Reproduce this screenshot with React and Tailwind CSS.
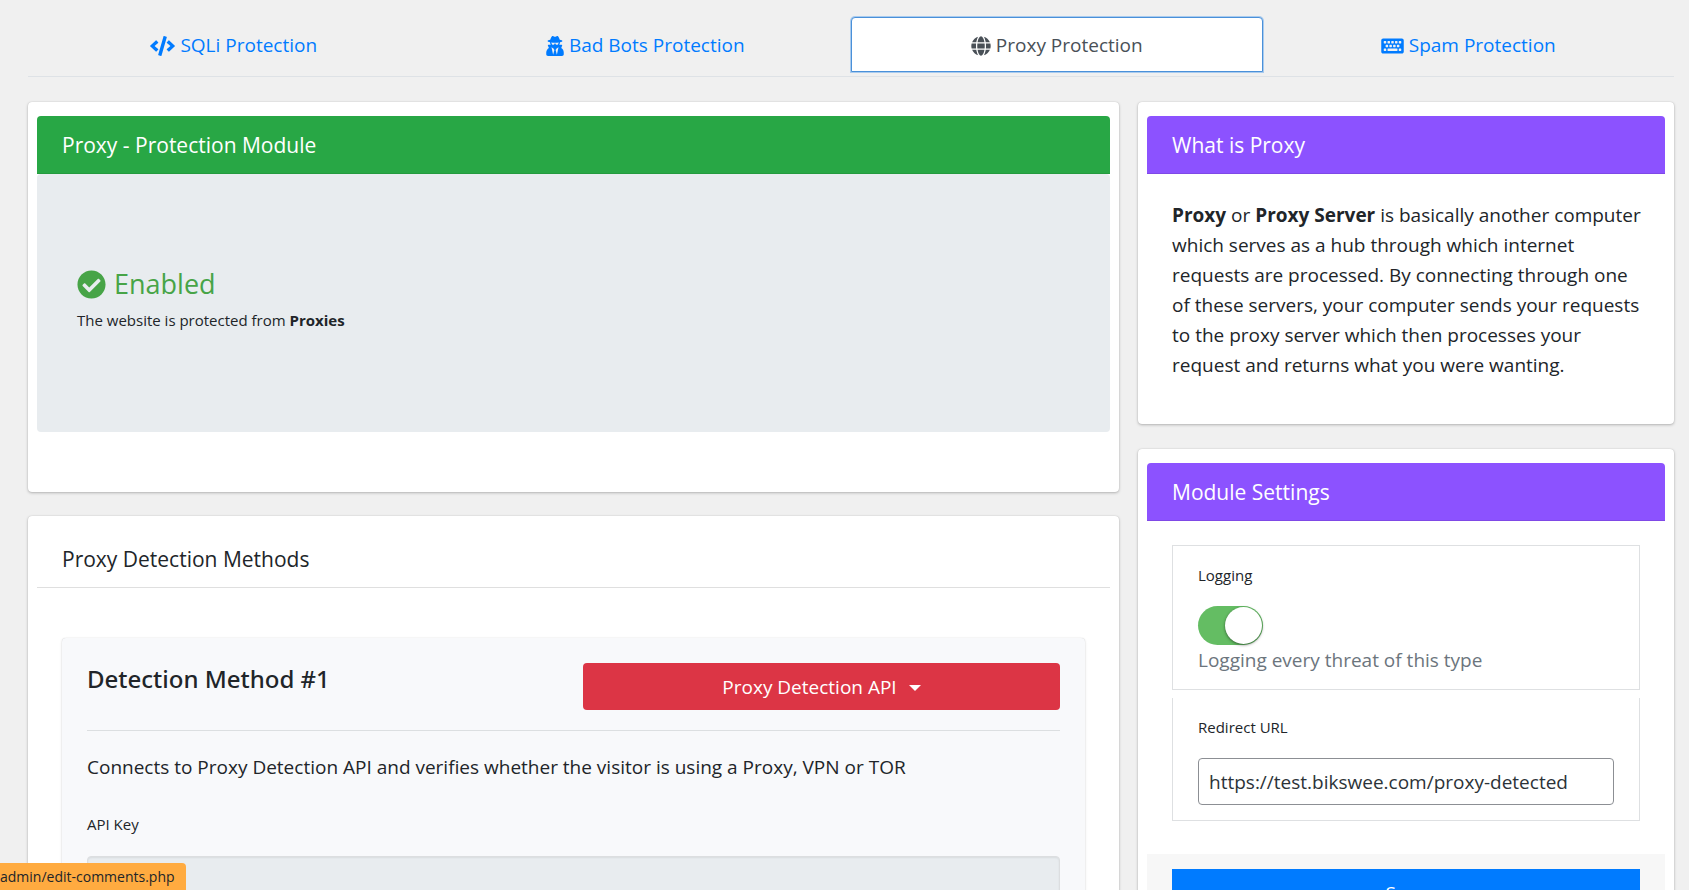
import { FaCode, FaUserSecret, FaGlobe, FaKeyboard, FaCheckCircle } from "react-icons/fa";

const tabs = [
  { label: "SQLi Protection", Icon: FaCode, iconClass: "w-[25px]" },
  { label: "Bad Bots Protection", Icon: FaUserSecret, iconClass: "w-[18px]" },
  { label: "Proxy Protection", Icon: FaGlobe, iconClass: "w-5", active: true },
  { label: "Spam Protection", Icon: FaKeyboard, iconClass: "w-[23px]" },
];

function Tab({ label, Icon, iconClass, active }) {
  const state = active
    ? "border-[#4a90d9] bg-white text-[#495057] shadow-[0_0_0_1px_#a9cbee]"
    : "border-transparent text-[#007bff]";
  return (
    <a
      href="#"
      aria-current={active ? "page" : undefined}
      className={`flex flex-1 items-center justify-center gap-[5px] rounded-t border pt-[13px] pb-[11px] leading-[29px] ${state}`}
    >
      <Icon className={`h-5 ${iconClass}`} aria-hidden="true" />
      {label}
    </a>
  );
}

function Card({ children }) {
  return (
    <section className="rounded bg-white px-[9px] pt-[14px] shadow-[0_0_1px_rgba(0,0,0,0.2),0_1px_3px_rgba(0,0,0,0.25)]">
      {children}
    </section>
  );
}

function CardHeader({ children, tone }) {
  return (
    <header className={`rounded-t border-b px-[25px] pt-[15px] pb-[13px] ${tone}`}>
      <h3 className="text-[21px] leading-[29px]">{children}</h3>
    </header>
  );
}

const purple = "border-[#7f49e6] bg-[#8c52ff] text-white";

export default function App() {
  return (
    <div className="relative h-screen overflow-hidden bg-[#f0f0f0] px-7 pt-[17px] pr-[15px] font-['Open_Sans',sans-serif] text-[19px] leading-[30px] text-[#212529]">
      <nav className="flex h-[60px] items-start border-b border-[#dee2e6]" aria-label="Protection modules">
        {tabs.map((tab) => (
          <Tab key={tab.label} {...tab} />
        ))}
      </nav>

      <main className="mt-[25px] grid grid-cols-3 items-start gap-[19px]">
        <div className="col-span-2 flex flex-col gap-6">
          <Card>
            <CardHeader tone="border-[#249a3e] bg-[#28a745] text-white">Proxy - Protection Module</CardHeader>
            <div className="mb-[60px] rounded bg-[#e8ecef] px-10 pt-[89px] pb-[97px]">
              <h2 className="flex items-center gap-2 text-[27px] leading-[42px] text-[#47a447]">
                <FaCheckCircle className="size-[29px]" aria-hidden="true" />
                Enabled
              </h2>
              <p className="text-[15px]">
                The website is protected from <strong>Proxies</strong>
              </p>
            </div>
          </Card>

          <Card>
            <CardHeader tone="border-[#dfdfdf]">Proxy Detection Methods</CardHeader>
            <div className="px-[25px] py-[50px]">
              <section className="rounded bg-[#f8f9fb] p-[25px] shadow-[0_0_1px_rgba(0,0,0,0.2),0_1px_3px_rgba(0,0,0,0.12)]">
                <div className="grid grid-cols-2 gap-[19px] border-b border-[#dcdfe1] pb-5">
                  <h4 className="font-['Noto_Sans',sans-serif] text-[24px] leading-[31px] font-medium">
                    Detection Method #1
                  </h4>
                  <button
                    type="button"
                    className="flex items-center justify-center gap-3 rounded bg-[#dc3545] px-3 pt-[9px] pb-[7px] leading-[31px] text-white"
                  >
                    Proxy Detection API
                    <span className="border-x-[6px] border-t-[6px] border-x-transparent border-t-white" aria-hidden="true" />
                  </button>
                </div>
                <p className="pt-[21px]">
                  Connects to Proxy Detection API and verifies whether the visitor is using a Proxy, VPN or TOR
                </p>
                <label htmlFor="api-key" className="mt-[27px] mb-[17px] block text-[15px]">
                  API Key
                </label>
                <input
                  id="api-key"
                  type="text"
                  disabled
                  className="block h-12 w-full rounded border border-[#dcdee0] bg-[#e8ecef] px-3 shadow-[inset_0_1px_2px_rgba(0,0,0,0.07)]"
                />
              </section>
            </div>
          </Card>
        </div>

        <div className="flex flex-col gap-[25px]">
          <Card>
            <CardHeader tone={purple}>What is Proxy</CardHeader>
            <p className="pt-[26px] pr-4 pb-[44px] pl-[25px]">
              <strong>Proxy</strong> or <strong>Proxy Server</strong> is basically another computer which serves as a hub
              through which internet requests are processed. By connecting through one of these servers, your computer
              sends your requests to the proxy server which then processes your request and returns what you were
              wanting.
            </p>
          </Card>

          <Card>
            <CardHeader tone={purple}>Module Settings</CardHeader>
            <form>
              <div className="flex flex-col gap-2 px-[25px] pt-6 pb-[33px]">
                <div className="border border-[#dee0e2] px-[25px] py-[14px]">
                  <label htmlFor="logging" className="block text-[15px]">
                    Logging
                  </label>
                  <input
                    id="logging"
                    type="checkbox"
                    defaultChecked
                    className="mt-4 block h-[39px] w-[65px] appearance-none rounded-full bg-[#dfdfdf] before:block before:size-[37px] before:translate-x-px before:translate-y-px before:rounded-full before:bg-white before:shadow-[0_1px_3px_rgba(0,0,0,0.5)] checked:bg-[#64bd63] checked:before:translate-x-[27px]"
                  />
                  <p className="text-[#6c757d]">Logging every threat of this type</p>
                </div>
                <div className="border border-t-0 border-[#dee0e2] px-[25px] pt-[14px] pb-[15px]">
                  <label htmlFor="redirect" className="block text-[15px]">
                    Redirect URL
                  </label>
                  <input
                    id="redirect"
                    type="text"
                    defaultValue="https://test.bikswee.com/proxy-detected"
                    className="mt-4 block h-[47px] w-full rounded border border-[#8c8f94] bg-white px-[10px] text-[#2c3338]"
                  />
                </div>
              </div>
              <footer className="bg-[#f7f7f7] px-[25px] py-[15px]">
                <button type="submit" className="block w-full bg-[#007bff] px-3 pt-[9px] pb-[7px] leading-[31px] text-white">
                  Save
                </button>
              </footer>
            </form>
          </Card>
        </div>
      </main>

      <div className="absolute bottom-0 left-0 rounded-tr bg-[#ffab40] pr-[11px] text-[14px] leading-[27px]">
        admin/edit-comments.php
      </div>
    </div>
  );
}
